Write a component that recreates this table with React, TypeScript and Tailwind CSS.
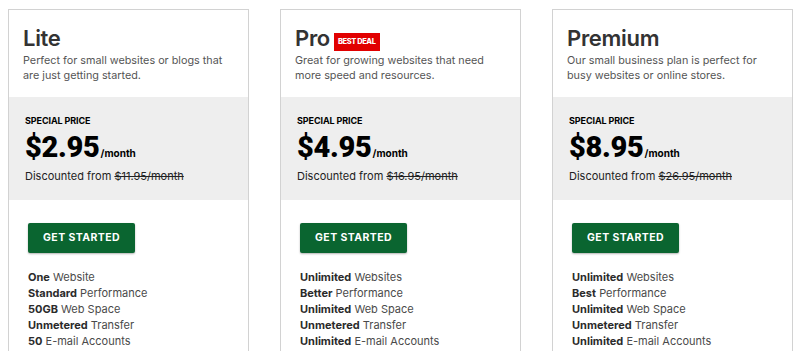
import React from 'react';

type Feature = { b: string; t: string };

type Plan = {
  name: string;
  badge?: string;
  desc: string[];
  price: string;
  was: string;
  features: Feature[];
};

const plans: Plan[] = [
  {
    name: 'Lite',
    desc: ['Perfect for small websites or blogs that', 'are just getting started.'],
    price: '$2.95',
    was: '$11.95/month',
    features: [
      { b: 'One', t: 'Website' },
      { b: 'Standard', t: 'Performance' },
      { b: '50GB', t: 'Web Space' },
      { b: 'Unmetered', t: 'Transfer' },
      { b: '50', t: 'E-mail Accounts' },
    ],
  },
  {
    name: 'Pro',
    badge: 'BEST DEAL',
    desc: ['Great for growing websites that need', 'more speed and resources.'],
    price: '$4.95',
    was: '$16.95/month',
    features: [
      { b: 'Unlimited', t: 'Websites' },
      { b: 'Better', t: 'Performance' },
      { b: 'Unlimited', t: 'Web Space' },
      { b: 'Unmetered', t: 'Transfer' },
      { b: 'Unlimited', t: 'E-mail Accounts' },
    ],
  },
  {
    name: 'Premium',
    desc: ['Our small business plan is perfect for', 'busy websites or online stores.'],
    price: '$8.95',
    was: '$26.95/month',
    features: [
      { b: 'Unlimited', t: 'Websites' },
      { b: 'Best', t: 'Performance' },
      { b: 'Unlimited', t: 'Web Space' },
      { b: 'Unmetered', t: 'Transfer' },
      { b: 'Unlimited', t: 'E-mail Accounts' },
    ],
  },
];

function PlanCard({ plan }: { plan: Plan }) {
  return (
    <div className="w-[241px] h-[400px] shrink-0 border border-[#d2d2d2] bg-white">
      {/* header */}
      <div className="h-[87px] px-[14px] pt-[16px]">
        <div className="flex items-start gap-[4px]">
          <h2 className="text-[22px] leading-[24px] font-semibold text-[#333] tracking-[-0.3px]">{plan.name}</h2>
          {plan.badge && (
            <span className="mt-[7px] -mb-[1px] bg-[#e10000] text-white text-[7.5px] leading-[18px] font-extrabold px-[4px] tracking-[-0.4px]">
              {plan.badge}
            </span>
          )}
        </div>
        <p className="mt-[3px] text-[10.8px] leading-[15px] text-[#555]">
          {plan.desc[0]}
          <br />
          {plan.desc[1]}
        </p>
      </div>

      {/* price */}
      <div className="h-[103px] bg-[#eeeeee] px-[16px] pt-[18px]">
        <div className="text-[9px] leading-[12px] font-bold text-black tracking-[-0.1px]">SPECIAL PRICE</div>
        <div className="mt-[6px] flex items-baseline text-black">
          <span
            className="text-[29px] leading-[29px] font-black tracking-[-0.3px]"
            style={{ fontFamily: 'Roboto, Inter, sans-serif' }}
          >
            {plan.price}
          </span>
          <span className="ml-[1px] text-[10px] font-bold">/month</span>
        </div>
        <div className="mt-[7px] text-[11px] leading-[14px] text-[#222]">
          Discounted from <span className="line-through">{plan.was}</span>
        </div>
      </div>

      {/* features */}
      <div className="px-[19px] pt-[23px]">
        <button className="w-[107px] h-[30px] rounded-[2px] bg-[#0a6530] text-white text-[10.5px] font-bold tracking-[0.4px] shadow-[0_1px_2px_rgba(0,0,0,0.3)]">
          GET STARTED
        </button>
        <ul className="mt-[16px] text-[11px] leading-[16px] text-[#4a4a4a]">
          {plan.features.map((f, i) => (
            <li key={i}>
              <span className="font-bold text-[#2b2b2b]">{f.b}</span> {f.t}
            </li>
          ))}
        </ul>
      </div>
    </div>
  );
}

export default function App() {
  return (
    <div
      className="h-[351px] w-[800px] overflow-hidden bg-white pl-[8px] pt-[9px] flex gap-[31px]"
      style={{ fontFamily: 'Inter, "Noto Sans", sans-serif' }}
    >
      {plans.map((p) => (
        <PlanCard key={p.name} plan={p} />
      ))}
    </div>
  );
}
